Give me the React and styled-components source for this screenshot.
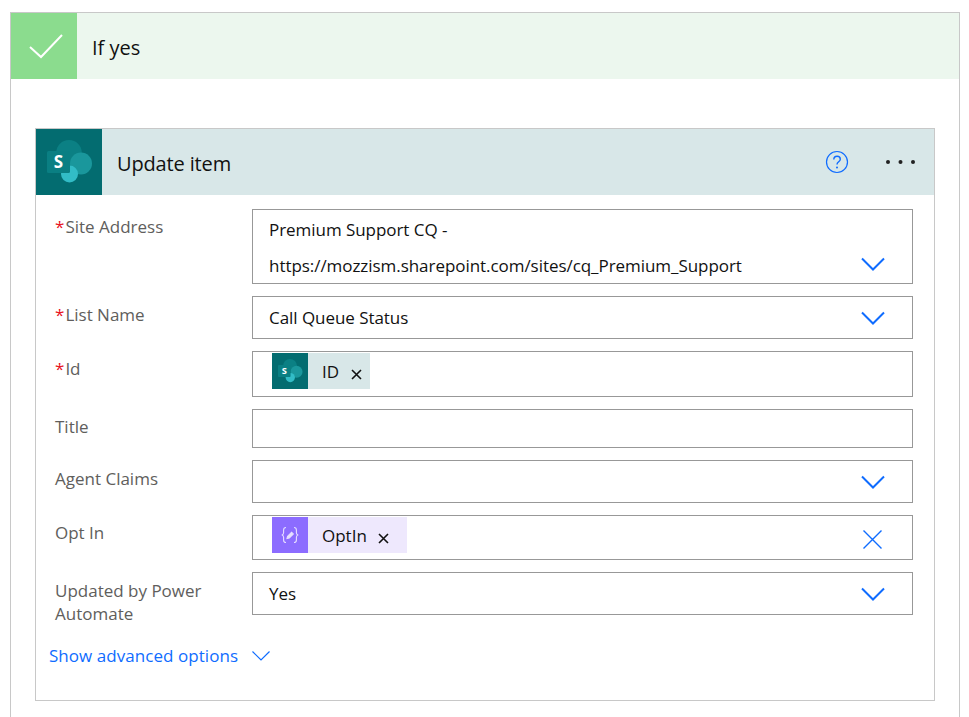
import React from "react";
import styled, { createGlobalStyle } from "styled-components";

const Global = createGlobalStyle`
  html, body { margin: 0; padding: 0; background: #fff; }
  body { font-family: "Open Sans", "Noto Sans", "Liberation Sans", sans-serif; color: #111; }
`;

const Page = styled.div`
  height: 717px;
  overflow: hidden;
  padding: 12px 9px 0 10px;
  box-sizing: border-box;
`;

const Outer = styled.div`
  border: 1px solid #c8c8c8;
  border-bottom: 0;
  height: 705px;
  box-sizing: border-box;
`;

const CondHeader = styled.div`
  display: flex;
  align-items: center;
  height: 66px;
  background: #ecf7ee;
`;

const IconTile = styled.div`
  display: flex;
  align-items: center;
  justify-content: center;
  flex: none;
  width: 66px;
  height: 66px;
  background: ${(p) => p.$bg};
`;

const CondTitle = styled.div`
  margin-left: 15px;
  font-size: 20px;
  margin-top: 2px;
`;

const Card = styled.div`
  margin: 49px 24px 0 24px;
  height: 573px;
  box-sizing: border-box;
  border: 1px solid #c8c8c8;
`;

const CardHeader = styled.div`
  display: flex;
  align-items: center;
  height: 66px;
  background: #d8e7e8;
`;

const CardTitle = styled.div`
  flex: 1;
  margin: 3px 0 0 15px;
  font-size: 20px;
  letter-spacing: -0.15px;
`;

const HeaderActions = styled.div`
  display: flex;
  align-items: center;
  gap: 36px;
  padding-right: 17px;
`;

const Form = styled.div`
  display: flex;
  flex-direction: column;
  gap: 12px;
  padding: 14px 21px 0 19px;
`;

const Row = styled.div`
  display: flex;
`;

const Label = styled.div`
  flex: none;
  width: 197px;
  padding-top: ${(p) => (p.$drop ? 7 : 6)}px;
  font-size: 17px;
  line-height: 23px;
  color: #605e5c;
`;

const Star = styled.span`
  color: #e81123;
  margin-right: 1px;
`;

const Field = styled.div`
  flex: 1;
  display: flex;
  align-items: ${(p) => (p.$tall ? "flex-end" : p.$chip ? "flex-start" : "center")};
  justify-content: space-between;
  height: ${(p) => p.$h}px;
  box-sizing: border-box;
  border: 1px solid #989898;
  padding: ${(p) => (p.$chip ? 1 : 0)}px 27px 0 ${(p) => (p.$chip ? 19 : 16)}px;
`;

const Value = styled.div`
  font-size: 17px;
  line-height: 36px;
  letter-spacing: -0.05px;
  margin-bottom: ${(p) => (p.$tall ? -1 : 0)}px;
  color: #111;
`;

const Chevron = styled.svg`
  display: block;
  flex: none;
  margin-bottom: ${(p) => (p.$tall ? 12 : 0)}px;
`;

const Chip = styled.div`
  display: flex;
  align-items: center;
  height: 36px;
  background: ${(p) => p.$bg};
`;

const ChipIcon = styled.div`
  display: flex;
  align-items: center;
  justify-content: center;
  width: 36px;
  height: 36px;
  background: ${(p) => p.$bg};
`;

const ChipText = styled.span`
  margin-left: 14px;
  font-size: 17px;
`;

const ChipClose = styled.svg`
  display: block;
  margin: 6px ${(p) => p.$end}px 0 ${(p) => p.$gap}px;
`;

const ClearButton = styled.svg`
  display: block;
  align-self: center;
  margin: 3px 3px 0 0;
`;

const AdvancedLink = styled.div`
  display: flex;
  align-items: center;
  gap: 14px;
  margin: 19px 0 0 13px;
  font-size: 17px;
  letter-spacing: 0.05px;
  color: #0f6cff;
`;

const SharePointIcon = ({ size }) => (
  <svg width={size} height={size} viewBox="0 0 66 66">
    <circle cx="33" cy="23.8" r="12.8" fill="#0b8084" />
    <circle cx="45" cy="34.5" r="11" fill="#1a979c" />
    <circle cx="33.5" cy="45" r="8.5" fill="#32bcc6" />
    <rect x="11" y="22" width="23" height="22" rx="1.5" fill="#0a7f83" />
    <text x="22.5" y="39" textAnchor="middle" fontSize="17" fontWeight="700" fill="#fff" fontFamily="Open Sans, sans-serif">S</text>
  </svg>
);

const VariableIcon = () => (
  <svg width="36" height="36" viewBox="0 0 36 36" fill="none" stroke="#e6deff" strokeWidth="1.1">
    <path d="M14 10.5c-2 0-2.4 1-2.4 2.6v2.6c0 1.2-.6 2-1.8 2.3 1.2.3 1.8 1.1 1.8 2.3v2.6c0 1.6.4 2.6 2.4 2.6" />
    <path d="M22 10.5c2 0 2.4 1 2.4 2.6v2.6c0 1.2.6 2 1.8 2.3-1.2.3-1.8 1.1-1.8 2.3v2.6c0 1.6-.4 2.6-2.4 2.6" />
    <path d="M15 21.5l.6-2.3 4-4 1.7 1.7-4 4z" fill="#e6deff" />
  </svg>
);

const ChevronDown = ({ tall }) => (
  <Chevron $tall={tall} width="24" height="14" viewBox="0 0 24 14" fill="none" stroke="#0f6cff" strokeWidth="2">
    <path d="M1 1.5l11 11 11-11" />
  </Chevron>
);

const Close = ({ gap, end }) => (
  <ChipClose $gap={gap} $end={end} width="11" height="11" viewBox="0 0 11 11" fill="none" stroke="#111" strokeWidth="1.6">
    <path d="M1 1l9 9M10 1l-9 9" />
  </ChipClose>
);

export default function App() {
  return (
    <Page>
      <Global />
      <Outer>
        <CondHeader>
          <IconTile $bg="#8bdc8e">
            <svg width="37" height="26" viewBox="0 0 37 26" fill="none" stroke="#fff" strokeWidth="2">
              <path d="M4 14l11 10L36 2" />
            </svg>
          </IconTile>
          <CondTitle>If yes</CondTitle>
        </CondHeader>
        <Card>
          <CardHeader>
            <IconTile $bg="#036c70">
              <SharePointIcon size={66} />
            </IconTile>
            <CardTitle>Update item</CardTitle>
            <HeaderActions>
              <svg width="24" height="24" viewBox="0 0 24 24" fill="none" stroke="#0f6cff">
                <circle cx="12" cy="12" r="10.5" strokeWidth="1.2" />
                <path d="M8.8 9.5c0-2 1.4-3.2 3.3-3.2s3.2 1.2 3.2 2.9c0 2.6-3.3 2.6-3.3 5.3" strokeWidth="1.4" />
                <circle cx="12" cy="17.5" r="1" fill="#0f6cff" stroke="none" />
              </svg>
              <svg width="32" height="6" viewBox="0 0 32 6" fill="#222">
                <circle cx="3" cy="3" r="2" />
                <circle cx="15.5" cy="3" r="2" />
                <circle cx="28" cy="3" r="2" />
              </svg>
            </HeaderActions>
          </CardHeader>
          <Form>
            <Row>
              <Label><Star>*</Star>Site Address</Label>
              <Field $h={75} $tall>
                <Value $tall>
                  Premium Support CQ -<br />
                  https://mozzism.sharepoint.com/sites/cq_Premium_Support
                </Value>
                <ChevronDown tall />
              </Field>
            </Row>
            <Row>
              <Label $drop><Star>*</Star>List Name</Label>
              <Field $h={43}>
                <Value>Call Queue Status</Value>
                <ChevronDown />
              </Field>
            </Row>
            <Row>
              <Label><Star>*</Star>Id</Label>
              <Field $h={46} $chip>
                <Chip $bg="#d8e7e8">
                  <ChipIcon $bg="#036c70"><SharePointIcon size={36} /></ChipIcon>
                  <ChipText>ID</ChipText>
                  <Close gap={12} end={8} />
                </Chip>
              </Field>
            </Row>
            <Row>
              <Label>Title</Label>
              <Field $h={39} />
            </Row>
            <Row>
              <Label $drop>Agent Claims</Label>
              <Field $h={43}>
                <span />
                <ChevronDown />
              </Field>
            </Row>
            <Row>
              <Label>Opt In</Label>
              <Field $h={45} $chip>
                <Chip $bg="#eee8fd">
                  <ChipIcon $bg="#8c6cff"><VariableIcon /></ChipIcon>
                  <ChipText>OptIn</ChipText>
                  <Close gap={11} end={18} />
                </Chip>
                <ClearButton width="19" height="19" viewBox="0 0 19 19" fill="none" stroke="#0f6cff" strokeWidth="1.4">
                  <path d="M.5.5l18 18M18.5.5l-18 18" />
                </ClearButton>
              </Field>
            </Row>
            <Row>
              <Label $drop>Updated by Power Automate</Label>
              <Field $h={43}>
                <Value>Yes</Value>
                <ChevronDown />
              </Field>
            </Row>
          </Form>
          <AdvancedLink>
            Show advanced options
            <svg width="18" height="10" viewBox="0 0 18 10" fill="none" stroke="#0f6cff" strokeWidth="1.2">
              <path d="M.5.5L9 9 17.5.5" />
            </svg>
          </AdvancedLink>
        </Card>
      </Outer>
    </Page>
  );
}
